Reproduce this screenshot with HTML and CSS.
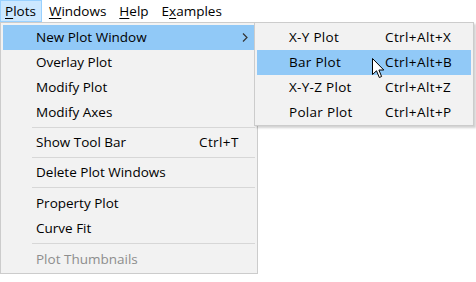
FILE: index.html
```html
<!DOCTYPE html>
<html>
<head>
<meta charset="utf-8">
<link rel="stylesheet" href="styles.css">
</head>
<body>
<div class="menubar">
  <div class="mb-item active"><u>P</u>lots</div>
  <div class="mb-item"><u>W</u>indows</div>
  <div class="mb-item"><u>H</u>elp</div>
  <div class="mb-item">E<u>x</u>amples</div>
</div>

<div class="menu main">
  <div class="item hot"><span class="label">New Plot Window</span><span class="key"></span><span class="arrow"><svg width="6" height="9" viewBox="0 0 6 9"><path d="M1 0.5 L5 4.5 L1 8.5" fill="none" stroke="#333" stroke-width="1.2"/></svg></span></div>
  <div class="item"><span class="label">Overlay Plot</span></div>
  <div class="item"><span class="label">Modify Plot</span></div>
  <div class="item"><span class="label">Modify Axes</span></div>
  <div class="sep"></div>
  <div class="item"><span class="label">Show Tool Bar</span><span class="key">Ctrl+T</span></div>
  <div class="sep"></div>
  <div class="item"><span class="label">Delete Plot Windows</span></div>
  <div class="sep wide"></div>
  <div class="item"><span class="label">Property Plot</span></div>
  <div class="item"><span class="label">Curve Fit</span></div>
  <div class="sep wide"></div>
  <div class="item disabled"><span class="label">Plot Thumbnails</span></div>
</div>

<div class="menu sub">
  <div class="item"><span class="label">X-Y Plot</span><span class="key">Ctrl+Alt+X</span></div>
  <div class="item hot"><span class="label">Bar Plot</span><span class="key">Ctrl+Alt+B</span></div>
  <div class="item"><span class="label">X-Y-Z Plot</span><span class="key">Ctrl+Alt+Z</span></div>
  <div class="item"><span class="label">Polar Plot</span><span class="key">Ctrl+Alt+P</span></div>
</div>

<svg class="cursor" width="14" height="22" viewBox="0 0 14 22">
  <path d="M0.5 0.5 L0.5 16.5 L4.5 12.8 L7.3 19.5 L9.6 18.5 L6.9 12 L11.8 12 Z" fill="#fff" stroke="#000" stroke-width="1" stroke-linejoin="miter"/>
</svg>
</body>
</html>
```
FILE: styles.css
```css
* { box-sizing: border-box; }
html, body {
  margin: 0;
  padding: 0;
  background: #ffffff;
}
body {
  width: 476px;
  height: 282px;
  position: relative;
  overflow: hidden;
  font-family: "Open Sans", "Noto Sans", "DejaVu Sans", sans-serif;
  font-size: 13.5px;
  color: #000;
}
u { text-decoration: underline; text-underline-offset: 2px; text-decoration-thickness: 1px; }

.menubar {
  display: flex;
  height: 22px;
  background: #fff;
}
.mb-item {
  height: 22px;
  line-height: 20px;
  padding: 0 5px 0 4px;
  border: 1px solid transparent;
  margin-right: 2px;
}
.mb-item.active {
  background: #cce8ff;
  border-color: #99d1ff;
}

.menu {
  position: absolute;
  background: #f2f2f2;
  border: 1px solid #cccccc;
  padding: 2px;
}
.menu.main {
  left: 0;
  top: 22px;
  width: 258px;
  height: 252px;
}
.menu.sub {
  left: 254px;
  top: 22px;
  width: 220px;
  height: 104px;
  box-shadow: 2px 2px 2px rgba(0,0,0,0.18);
}
.item {
  height: 25px;
  line-height: 25px;
  display: grid;
  align-items: center;
  white-space: nowrap;
}
.main .item {
  grid-template-columns: 163px 1fr 17px;
  padding-left: 33px;
}
.sub .item {
  grid-template-columns: 96px 1fr;
  padding-left: 32px;
}
.sub .label { letter-spacing: 0.3px; }
.key { letter-spacing: 0.4px; }
.item.hot {
  background: #91c9f7;
}
.item.disabled {
  color: #8d8d8d;
}
.arrow {
  display: flex;
  align-items: center;
  justify-content: flex-start;
  padding-left: 4px;
  height: 25px;
}
.sep {
  height: 5px;
  padding-top: 2px;
  margin-left: 29px;
}
.sep::before {
  content: "";
  display: block;
  height: 1px;
  background: #d7d7d7;
}
.sep.wide {
  height: 6px;
}
.cursor {
  position: absolute;
  left: 372px;
  top: 58px;
}
```
